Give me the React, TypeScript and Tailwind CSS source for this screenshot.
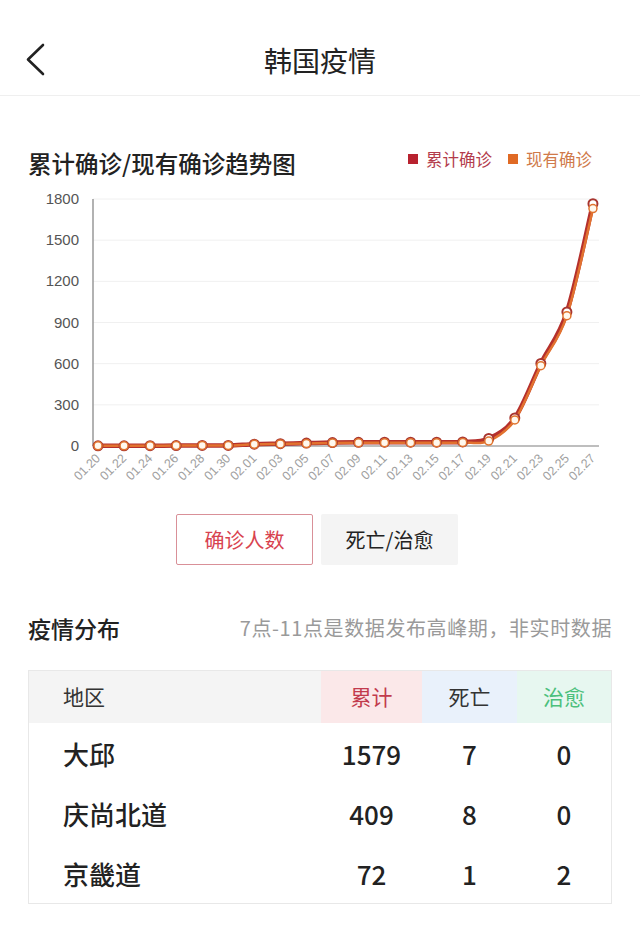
import React from "react";

const dates = [
  "01.20", "01.22", "01.24", "01.26", "01.28", "01.30", "02.01", "02.03", "02.05", "02.07",
  "02.09", "02.11", "02.13", "02.15", "02.17", "02.19", "02.21", "02.23", "02.25", "02.27",
];
const total = [1, 1, 2, 3, 4, 4, 13, 17, 21, 25, 27, 28, 28, 28, 30, 55, 204, 602, 977, 1766];
const current = [1, 1, 2, 3, 4, 4, 12, 15, 18, 22, 24, 24, 24, 24, 26, 36, 190, 585, 950, 1730];

const rows = [
  { name: "大邱", total: 1579, dead: 7, cured: 0 },
  { name: "庆尚北道", total: 409, dead: 8, cured: 0 },
  { name: "京畿道", total: 72, dead: 1, cured: 2 },
];

// chart geometry, svg starts at page y=185
const TOP = 14;
const BASE = 261;
const X0 = 98;
const STEP = 26.05;
const yOf = (v: number) => BASE - (v / 1800) * (BASE - TOP);

function smoothPath(values: number[]) {
  const pts = values.map((v, i) => [X0 + i * STEP, yOf(v)]);
  let d = `M${pts[0][0]},${pts[0][1]}`;
  for (let i = 0; i < pts.length - 1; i++) {
    const p0 = pts[i - 1] || pts[i];
    const p1 = pts[i];
    const p2 = pts[i + 1];
    const p3 = pts[i + 2] || p2;
    const c1x = p1[0] + (p2[0] - p0[0]) / 6;
    const c1y = p1[1] + (p2[1] - p0[1]) / 6;
    const c2x = p2[0] - (p3[0] - p1[0]) / 6;
    const c2y = p2[1] - (p3[1] - p1[1]) / 6;
    d += ` C${c1x},${c1y} ${c2x},${c2y} ${p2[0]},${p2[1]}`;
  }
  return d;
}

function TrendChart() {
  const ticks = [0, 300, 600, 900, 1200, 1500, 1800];
  return (
    <svg width="640" height="310" className="block mt-[6px]">
      {ticks.map((t) => (
        <g key={t}>
          <line x1="93" x2="599" y1={yOf(t)} y2={yOf(t)} stroke={t === 0 ? "#a8a8a8" : "#f0f0f0"} strokeWidth={t === 0 ? 1.5 : 1} />
          <text x="79" y={yOf(t) + 5} textAnchor="end" fontSize="15" fill="#555" fontFamily="Liberation Sans, sans-serif">
            {t}
          </text>
        </g>
      ))}
      <line x1="93" x2="93" y1={TOP} y2={BASE} stroke="#999" strokeWidth="1.5" />
      {dates.map((d, i) => (
        <text
          key={d}
          x={X0 + i * STEP + 3}
          y={BASE + 13}
          textAnchor="end"
          fontSize="12.5"
          fill="#a0a0a0"
          fontFamily="Liberation Sans, sans-serif"
          transform={`rotate(-45 ${X0 + i * STEP + 3} ${BASE + 13})`}
        >
          {d}
        </text>
      ))}
      <path d={smoothPath(total)} fill="none" stroke="#b5302c" strokeWidth="4.5" />
      <path d={smoothPath(current)} fill="none" stroke="#e2722f" strokeWidth="2.5" />
      {total.map((v, i) => (
        <circle key={"t" + i} cx={X0 + i * STEP} cy={yOf(v)} r="4.5" fill="#fff" stroke="#a8352f" strokeWidth="2" />
      ))}
      {current.map((v, i) => (
        <circle key={"c" + i} cx={X0 + i * STEP} cy={yOf(v)} r="4" fill="#fff8ee" stroke="#e0742f" strokeWidth="1.5" />
      ))}
    </svg>
  );
}

export default function App() {
  return (
    <div className="w-[640px] min-h-[931px] bg-white font-['Noto_Sans_CJK_SC',sans-serif] text-[#222]">
      <div className="relative h-[96px] pt-[24px] flex items-center justify-center border-b border-[#efefef]">
        <svg className="absolute left-[24px] top-[41px]" width="24" height="38" viewBox="0 0 24 38">
          <path d="M19 4 L4 18.5 L19 33" fill="none" stroke="#222" strokeWidth="2.6" strokeLinecap="round" strokeLinejoin="round" />
        </svg>
        <h1 className="text-[28px] leading-none">韩国疫情</h1>
      </div>

      <div className="mt-[51px] px-[28px] flex items-center justify-between">
        <h2 className="text-[23.5px] leading-[32px] font-medium">累计确诊/现有确诊趋势图</h2>
        <div className="flex items-center text-[16.5px] pr-[20px] -mt-[8px]">
          <span className="w-[10px] h-[10px] bg-[#b8222f]" />
          <span className="ml-[8px] text-[#b33c4c]">累计确诊</span>
          <span className="ml-[16px] w-[10px] h-[10px] bg-[#e06a24]" />
          <span className="ml-[8px] text-[#d07a4a]">现有确诊</span>
        </div>
      </div>

      <TrendChart />

      <div className="mt-[19px] flex gap-[8px] pl-[176px]">
        <button className="w-[137px] h-[51px] border border-[#d99098] rounded-[2px] text-[20px] text-[#d8434f]">确诊人数</button>
        <button className="w-[137px] h-[51px] bg-[#f4f4f4] rounded-[2px] text-[20px] text-[#222]">死亡/治愈</button>
      </div>

      <div className="mt-[48px] px-[28px] flex items-center justify-between">
        <h2 className="text-[23px] leading-[30px] font-medium">疫情分布</h2>
        <span className="text-[20px] tracking-[0.6px] text-[#9a9a9a]">7点-11点是数据发布高峰期，非实时数据</span>
      </div>

      <div className="mt-[27px] mx-[28px] border border-[#e8e8e8]">
        <div className="grid grid-cols-[292px_101px_95px_94px] h-[52px] text-[21px]">
          <div className="bg-[#f4f4f4] flex items-center pl-[34px] text-[#333]">地区</div>
          <div className="bg-[#fbe8e9] flex items-center justify-center text-[#c23b4d]">累计</div>
          <div className="bg-[#e9f1fb] flex items-center justify-center text-[#333]">死亡</div>
          <div className="bg-[#e7f7f0] flex items-center justify-center text-[#4cc07c]">治愈</div>
        </div>
        {rows.map((r) => (
          <div key={r.name} className="grid grid-cols-[292px_101px_95px_94px] h-[60px] items-center text-[26px] font-medium">
            <div className="pl-[34px]">{r.name}</div>
            <div className="text-center">{r.total}</div>
            <div className="text-center">{r.dead}</div>
            <div className="text-center">{r.cured}</div>
          </div>
        ))}
      </div>
    </div>
  );
}
